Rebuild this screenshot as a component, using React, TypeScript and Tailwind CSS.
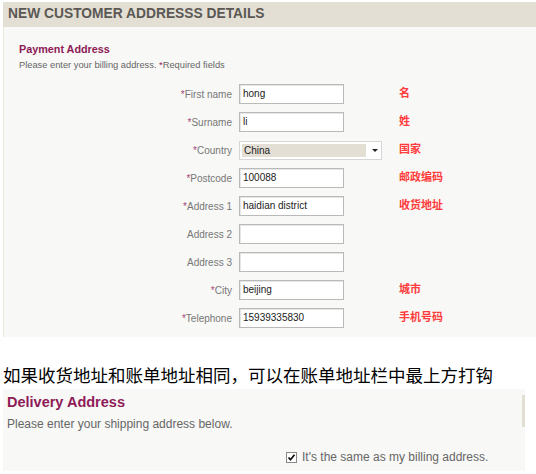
import React from "react";

const rows = [
  { label: "First name", req: true, value: "hong", note: "名" },
  { label: "Surname", req: true, value: "li", note: "姓" },
  { label: "Country", req: true, value: "China", note: "国家", select: true },
  { label: "Postcode", req: true, value: "100088", note: "邮政编码" },
  { label: "Address 1", req: true, value: "haidian district", note: "收货地址" },
  { label: "Address 2", req: false, value: "", note: "" },
  { label: "Address 3", req: false, value: "", note: "" },
  { label: "City", req: true, value: "beijing", note: "城市" },
  { label: "Telephone", req: true, value: "15939335830", note: "手机号码" },
];

export default function App() {
  return (
    <div className="w-[536px] h-[474px] bg-white overflow-hidden font-['Liberation_Sans',Arial,sans-serif]">
      <div className="pl-[3px] pt-[2px]">
        {/* header */}
        <div className="h-[25px] bg-[#e3dfd5] flex items-center pl-[5px]">
          <h1 className="text-[13.8px] font-bold text-[#5b5854]">NEW CUSTOMER ADDRESSS DETAILS</h1>
        </div>

        {/* payment panel */}
        <div className="h-[310px] bg-[#f8f8f6] border-l border-[#ebe8e0] pl-[15px] pt-[15px]">
          <div className="text-[10.8px] font-bold text-[#8e1b56] leading-[14px]">Payment Address</div>
          <div className="text-[9.3px] text-[#666] leading-[12px] mt-[3px]">
            Please enter your billing address. <span className="text-[#8e1b56]">*</span>Required fields
          </div>

          <div className="mt-[9px] flex flex-col">
            {rows.map((r) => (
              <div key={r.label} className="h-[28px] flex items-center">
                <div className="w-[213px] text-right text-[10px] text-[#777]">
                  {r.req && <span className="text-[#a04a78]">*</span>}
                  {r.label}
                </div>
                <div className="w-[167px] pl-[7px]">
                  {r.select ? (
                    <div className="w-[143px] h-[19px] bg-white border border-[#d6d6d6] flex items-center px-[2px]">
                      <div className="w-[124px] h-[13px] bg-[#e3dfd5] text-[10px] text-[#222] leading-[13px] pl-[2px]">
                        {r.value}
                      </div>
                      <svg width="8" height="5" viewBox="0 0 8 5" className="ml-[5px]">
                        <path d="M1 1h6L4 4z" fill="#222" />
                      </svg>
                    </div>
                  ) : (
                    <div className="w-[105px] h-[20px] bg-white border border-[#b9b9b9] shadow-[inset_1px_1px_0_#e6e6e6] text-[10px] text-[#222] leading-[18px] pl-[3px]">
                      {r.value}
                    </div>
                  )}
                </div>
                <div className="text-[11px] font-bold text-[#ff3b3b] font-['Noto_Sans_CJK_SC',sans-serif] -mt-[4px]">
                  {r.note}
                </div>
              </div>
            ))}
          </div>
        </div>
      </div>

      {/* note */}
      <div className="mt-[27px] pl-[3px] text-[17.5px] leading-[22px] text-black font-['Noto_Sans_CJK_SC',sans-serif]">
        如果收货地址和账单地址相同，可以在账单地址栏中最上方打钩
      </div>

      {/* delivery panel */}
      <div className="ml-[3px] mt-[3px] w-[522px] h-[82px] bg-[#f8f8f6] flex">
        <div className="flex-1 pl-[4px] pt-[4px]">
          <div className="text-[14.5px] font-bold text-[#8e1b56] leading-[18px]">Delivery Address</div>
          <div className="text-[12px] text-[#666] leading-[14px] mt-[6px]">Please enter your shipping address below.</div>
          <div className="flex items-center mt-[17px] pl-[279px]">
            <div className="w-[11px] h-[11px] border border-[#888] bg-white flex items-center justify-center">
              <svg width="9" height="9" viewBox="0 0 9 9">
                <path d="M1.5 4.5l2 2.2L7.5 1.8" stroke="#111" strokeWidth="1.8" fill="none" />
              </svg>
            </div>
            <span className="ml-[5px] text-[12px] text-[#666]">It's the same as my billing address.</span>
          </div>
        </div>
        <div className="w-[3px] h-[32px] mt-[6px] bg-[#e3dfd5]" />
      </div>
    </div>
  );
}
